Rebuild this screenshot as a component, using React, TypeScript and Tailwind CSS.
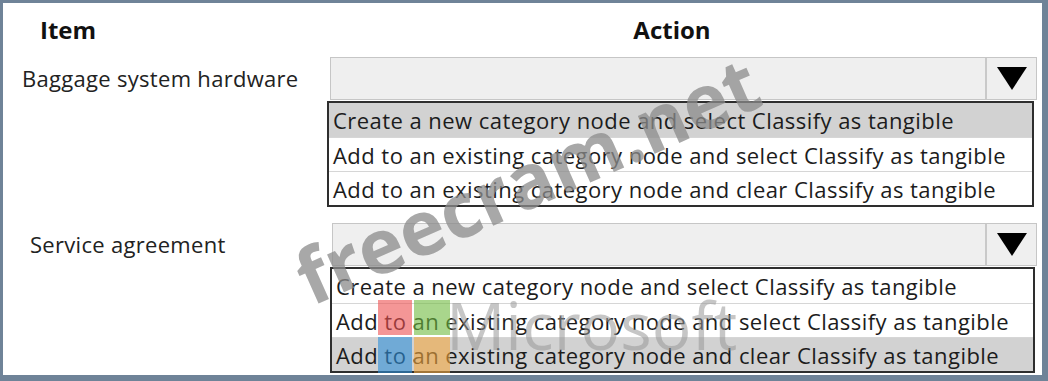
import React from 'react'

const firstOptions = [
  'Create a new category node and select Classify as tangible',
  'Add to an existing category node and select Classify as tangible',
  'Add to an existing category node and clear Classify as tangible',
]

function ClosedSelect({ className }: { className: string }) {
  return (
    <div className={`flex h-[43px] border border-[#c6c6c6] bg-[#efefef] ${className}`}>
      <div className="flex-1" />
      <div className="flex w-[51px] items-center justify-center border-l-2 border-[#c9c9c9]">
        <svg width="30" height="23" viewBox="0 0 30 23">
          <polygon points="0,0 30,0 15,23" fill="#000" />
        </svg>
      </div>
    </div>
  )
}

function OptionList({ selected, className }: { selected: number; className: string }) {
  return (
    <div className={`border-2 border-[#2e2e2e] bg-white ${className}`}>
      {firstOptions.map((opt, i) => (
        <div
          key={i}
          className={`flex h-[34px] items-center pl-[4px] text-[22px] leading-none tracking-[0.45px] text-[#1c1c1c] ${
            i > 0 ? 'border-t border-[#d6d6d6]' : ''
          } ${i === selected ? 'bg-[#d2d2d2]' : ''}`}
        >
          {opt}
        </div>
      ))}
    </div>
  )
}

export default function App() {
  return (
    <div className="relative h-[381px] w-[1048px] overflow-hidden border-t-[3px] border-l-[3px] border-r-[6px] border-b-[6px] border-[#6f8398] bg-white font-['Open_Sans',sans-serif]">
      {/* header */}
      <div className="flex h-[54px] items-center">
        <div className="w-[324px] pl-[37px] text-[24px] font-bold text-[#111]">Item</div>
        <div className="w-[690px] text-center text-[24px] font-bold text-[#111]">Action</div>
      </div>

      {/* first item */}
      <div className="flex">
        <div className="flex h-[43px] w-[324px] items-center whitespace-nowrap pl-[19px] text-[22px] tracking-[0.3px] text-[#222]">
          Baggage system hardware
        </div>
        <div className="w-[710px]">
          <ClosedSelect className="ml-[3px]" />
          <OptionList selected={0} className="mt-px w-[707px]" />
        </div>
      </div>

      {/* second item */}
      <div className="mt-[16px] flex">
        <div className="flex h-[43px] w-[324px] items-center whitespace-nowrap pl-[27px] text-[22px] tracking-[0.3px] text-[#222]">
          Service agreement
        </div>
        <div className="w-[710px]">
          <ClosedSelect className="ml-[5px]" />
          <OptionList selected={2} className="ml-[3px] mt-px w-[705px]" />
        </div>
      </div>

      {/* watermark */}
      <div className="pointer-events-none absolute left-[524px] top-[176px] -translate-x-1/2 -translate-y-1/2 rotate-[-24deg] whitespace-nowrap text-[76px] font-bold leading-none text-[#8c8c8c] opacity-75">
        freecram.net
      </div>
      <div className="pointer-events-none absolute left-[375px] top-[297px] h-[35px] w-[34px] bg-[#ec5050] opacity-60" />
      <div className="pointer-events-none absolute left-[411px] top-[297px] h-[35px] w-[36px] bg-[#6fbb40] opacity-60" />
      <div className="pointer-events-none absolute left-[375px] top-[334px] h-[36px] w-[34px] bg-[#2f8fd8] opacity-60" />
      <div className="pointer-events-none absolute left-[411px] top-[334px] h-[36px] w-[36px] bg-[#f2a640] opacity-60" />
      <div className="pointer-events-none absolute left-[443px] top-[288px] whitespace-nowrap text-[66px] leading-none text-[#999] opacity-55">
        Microsoft
      </div>
    </div>
  )
}
